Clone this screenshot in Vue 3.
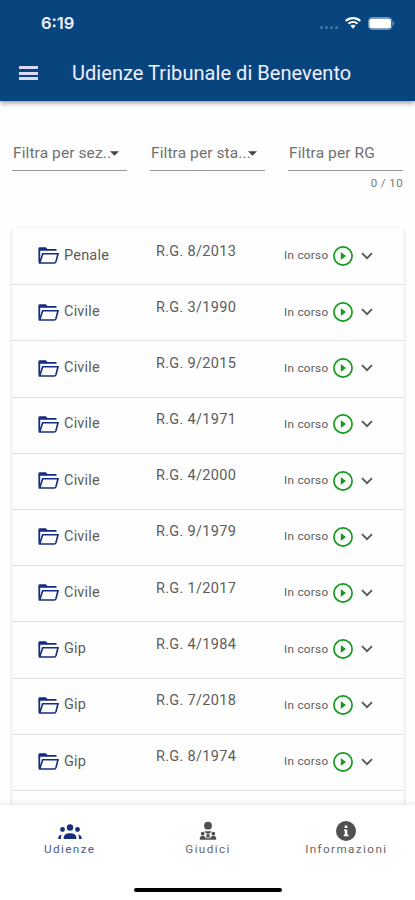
<template>
  <div class="app">
    <header class="app-header">
      <div class="status-bar">
        <span class="clock">6:19</span>
        <div class="status-icons">
          <span class="signal"><i v-for="n in 4" :key="n"></i></span>
          <svg class="wifi" viewBox="0 0 16 12">
            <path d="M8 0C4.900 0 2.100 1.200 0 3.200l1.500 1.600C3.200 3.200 5.500 2.300 8 2.300s4.800.9 6.500 2.500L16 3.200C13.900 1.200 11.100 0 8 0z" />
            <path d="M8 3.900c-2 0-3.900.8-5.200 2l1.500 1.600C5.300 6.600 6.600 6.100 8 6.100s2.700.5 3.700 1.400l1.500-1.600c-1.300-1.200-3.200-2-5.200-2z" />
            <path d="M8 7.700c-1 0-1.900.4-2.600 1L8 11.800l2.600-3.100c-.7-.6-1.600-1-2.600-1z" />
          </svg>
          <svg class="battery" viewBox="0 0 27 13">
            <rect class="battery-case" x="0.500" y="0.500" width="23.500" height="12" rx="3.500" />
            <rect x="1.300" y="1.500" width="21.700" height="10" rx="2.500" />
            <path class="battery-tip" d="M24.800 4.500c1 .3 1.500 1 1.500 2s-.5 1.700-1.500 2z" />
          </svg>
        </div>
      </div>
      <div class="toolbar">
        <button type="button" class="menu-button" aria-label="Menu">
          <i></i><i></i><i></i>
        </button>
        <h1>Udienze Tribunale di Benevento</h1>
      </div>
    </header>

    <main class="content">
      <!-- Filtri -->
      <section class="filters">
        <div v-for="filter in filters" :key="filter.label" class="filter">
          <div class="filter-field">
            <span class="filter-label">{{ filter.label }}</span>
            <svg v-if="filter.select" class="caret" viewBox="0 0 10 5">
              <path d="M0 0h10L5 5z" />
            </svg>
          </div>
          <span v-if="!filter.select" class="counter">0 / 10</span>
        </div>
      </section>

      <!-- Elenco udienze -->
      <section class="hearing-list">
        <div v-for="hearing in hearings" :key="hearing.rg" class="hearing">
          <div class="section-cell">
            <svg class="folder" viewBox="0 0 21 17">
              <path class="folder-tab" d="M0.500 1.500q0-1.200 1.200-1.200h6l2 1.900h-1.200v1.500H2.200v10z" />
              <path class="folder-line" d="M1.200 15.500V2M8 2.900h10.500M1.700 16l3-9.200h15.300l-2 7.700q-.5 1.500-1.800 1.500z" />
            </svg>
            <span>{{ hearing.section }}</span>
          </div>
          <span class="rg">R.G. {{ hearing.rg }}</span>
          <div class="state-cell">
            <span class="state">In corso</span>
            <svg class="play" viewBox="0 0 20 20">
              <circle cx="10" cy="10" r="9.100" />
              <path d="M7.800 6v8l5.200-4z" />
            </svg>
            <svg class="chevron" viewBox="0 0 12 8">
              <path d="M1 1.200l5 5 5-5" />
            </svg>
          </div>
        </div>
      </section>
    </main>

    <footer class="bottom-bar">
      <nav class="tabs">
        <a class="tab active">
          <svg class="tab-icon" viewBox="0 0 24 20">
            <circle cx="12" cy="6.500" r="3.200" />
            <circle cx="4.500" cy="8.500" r="2.400" />
            <circle cx="19.500" cy="8.500" r="2.400" />
            <path d="M5.700 18v-1.500c0-2.800 2.800-4.300 6.300-4.300s6.300 1.500 6.300 4.300V18z" />
            <path d="M0.300 18v-1c0-1.700 1.400-3 3.500-3.200-.6.900-.8 1.800-.8 2.700V18zM23.700 18v-1c0-1.700-1.400-3-3.500-3.200.6.900.8 1.800.8 2.700V18z" />
          </svg>
          <span>Udienze</span>
        </a>
        <a class="tab">
          <svg class="tab-icon" viewBox="0 0 24 20">
            <circle cx="12" cy="4.700" r="3.900" />
            <path d="M8.300 10.300h7.400l-1.900 2.200h-3.600zM10.900 13h2.200l.9 3.500h-4z" />
            <circle cx="6.700" cy="12.700" r="1.900" />
            <circle cx="17.300" cy="12.700" r="1.900" />
            <path d="M3.800 18.700v-1.700c0-2.600 5.800-2.600 5.800 0v1.700zM14.400 18.700v-1.700c0-2.600 5.800-2.600 5.800 0v1.700zM9 17.200h6v1.500H9z" />
          </svg>
          <span>Giudici</span>
        </a>
        <a class="tab">
          <svg class="tab-icon" viewBox="0 0 24 20">
            <circle cx="12" cy="10" r="10" />
            <path class="info-mark" d="M10.700 4.600h2.600v2.400h-2.600zM10 8.600h3.300v5h1.200v1.600H9.800v-1.600h1v-3.500H10z" />
          </svg>
          <span>Informazioni</span>
        </a>
      </nav>
      <div class="home-indicator"></div>
    </footer>
  </div>
</template>

<script setup>
const filters = [
  { label: 'Filtra per sez..', select: true },
  { label: 'Filtra per sta...', select: true },
  { label: 'Filtra per RG', select: false }
]

const hearings = [
  { section: 'Penale', rg: '8/2013' },
  { section: 'Civile', rg: '3/1990' },
  { section: 'Civile', rg: '9/2015' },
  { section: 'Civile', rg: '4/1971' },
  { section: 'Civile', rg: '4/2000' },
  { section: 'Civile', rg: '9/1979' },
  { section: 'Civile', rg: '1/2017' },
  { section: 'Gip', rg: '4/1984' },
  { section: 'Gip', rg: '7/2018' },
  { section: 'Gip', rg: '8/1974' }
]
</script>

<style>
body {
  margin: 0;
  background: #fff;
}
</style>

<style scoped>
.app {
  display: flex;
  flex-direction: column;
  height: 900px;
  overflow: hidden;
  background: #fefefe;
  font-family: Roboto, "Liberation Sans", sans-serif;
  color: #5c5c5c;
}

.app-header {
  flex: none;
  height: 101px;
  background: #08457e;
  color: #f0f0ff;
  box-shadow: 0 2px 5px rgba(0, 0, 0, 0.4);
  z-index: 1;
}

.status-bar {
  display: flex;
  align-items: center;
  justify-content: space-between;
  height: 46px;
  padding: 0 20px 0 41px;
  box-sizing: border-box;
}

.clock {
  font-family: Inter, sans-serif;
  font-size: 16.5px;
  font-weight: 600;
  line-height: 46px;
}

.status-icons {
  display: flex;
  align-items: center;
  fill: #fff;
}

.signal {
  display: flex;
  gap: 2px;
  margin: 8px 7px 0 0;
}

.signal i {
  width: 3px;
  height: 3px;
  border-radius: 50%;
  background: #4675a3;
}

.wifi {
  width: 16px;
  height: 12px;
  margin-right: 7px;
}

.battery {
  width: 27px;
  height: 13px;
}

.battery-case {
  fill: none;
  stroke: #7194b6;
}

.battery-tip {
  fill: #7194b6;
}

.toolbar {
  display: flex;
  align-items: center;
  height: 54px;
  padding-left: 19px;
}

.menu-button {
  display: flex;
  flex-direction: column;
  gap: 2.5px;
  width: 19px;
  margin: 0 34px 0 0;
  padding: 0;
  border: 0;
  background: none;
}

.menu-button i {
  height: 3px;
  background: #ddd8f5;
}

.toolbar h1 {
  margin: 0;
  font-size: 20px;
  font-weight: 400;
  letter-spacing: 0.05px;
  white-space: nowrap;
}

.content {
  flex: 1;
  min-height: 0;
  padding: 35px 11px 0 12px;
  overflow: hidden;
}

.filters {
  display: grid;
  grid-template-columns: repeat(3, 115px);
  gap: 23px;
  height: 92px;
}

.filter {
  display: flex;
  flex-direction: column;
}

.filter-field {
  display: flex;
  align-items: center;
  justify-content: space-between;
  height: 34px;
  padding-left: 1px;
  border-bottom: 1px solid #999;
}

.filter-label {
  white-space: nowrap;
  font-size: 15.5px;
  letter-spacing: 0.1px;
  color: #707070;
}

.caret {
  flex: none;
  width: 9px;
  height: 5px;
  margin: 1px 8px 0 -4px;
  fill: #444;
}

.counter {
  margin-top: 5px;
  align-self: flex-end;
  font-size: 11.5px;
  line-height: 14px;
  letter-spacing: 0.4px;
  color: #777;
}

.hearing-list {
  height: 600px;
  padding-top: 1px;
  border-radius: 4px;
  background: #fefefe;
  box-shadow: 0 1px 3px rgba(0, 0, 0, 0.18);
}

.hearing {
  display: grid;
  grid-template-columns: 118px 128px 1fr;
  height: 56.2px;
  padding-left: 26px;
  box-sizing: border-box;
  border-bottom: 1px solid #e2e2e2;
}

.section-cell,
.state-cell {
  display: flex;
  align-items: center;
  padding-bottom: 2.5px;
}

.section-cell {
  gap: 5px;
  font-size: 14.5px;
  letter-spacing: 0.2px;
}

.folder {
  width: 21px;
  height: 17px;
  margin-top: 1px;
}

.folder-tab {
  fill: #152d80;
}

.folder-line {
  fill: none;
  stroke: #152d80;
  stroke-width: 1.6;
}

.rg {
  padding-top: 12.5px;
  font-size: 14.5px;
  line-height: 20px;
  letter-spacing: 0.3px;
}

.state {
  width: 49px;
  font-size: 11.7px;
  letter-spacing: 0.3px;
}

.play {
  width: 20px;
  height: 20px;
  margin-top: 1px;
  fill: #149c1c;
}

.play circle {
  fill: none;
  stroke: #149c1c;
  stroke-width: 1.7;
}

.chevron {
  width: 12px;
  height: 8px;
  margin: 1px 0 0 8px;
  fill: none;
  stroke: #555;
  stroke-width: 1.8;
}

.bottom-bar {
  flex: none;
  height: 95px;
  background: #fff;
  box-shadow: 0 -1px 6px rgba(0, 0, 0, 0.1);
  z-index: 1;
}

.tabs {
  display: grid;
  grid-template-columns: repeat(3, 1fr);
  height: 83px;
}

.tab {
  display: flex;
  flex-direction: column;
  align-items: center;
  padding: 16px 0 0 1px;
  font-size: 11.7px;
  line-height: 14px;
  letter-spacing: 1.4px;
  color: #666;
  fill: #505050;
}

.tab.active {
  color: #4b5b94;
  fill: #182d7c;
}

.tab-icon {
  width: 24px;
  height: 20px;
  margin-bottom: 1px;
}

.info-mark {
  fill: #fff;
}

.home-indicator {
  width: 148px;
  height: 4px;
  margin: 0 auto;
  border-radius: 2px;
  background: #000;
}
</style>
